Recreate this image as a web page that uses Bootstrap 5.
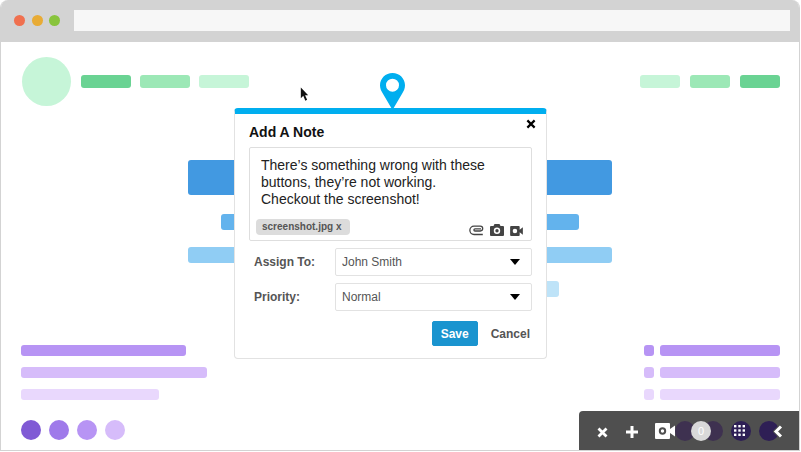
<!DOCTYPE html>
<html lang="en">
<head>
<meta charset="utf-8">
<title>Add A Note</title>
<link href="https://cdn.jsdelivr.net/npm/bootstrap@5.3.0/dist/css/bootstrap.min.css" rel="stylesheet">
<style>
html,body{margin:0;background:#fff;font-family:"Liberation Sans",Arial,sans-serif}
.shell{position:relative;width:800px;height:451px;border:1px solid #d3d3d3;border-top:0;border-radius:8px 8px 0 0;overflow:hidden;background:#fff}
.chrome{height:42px;margin:0 -1px;background:#d3d3d3;padding:10px 10px 11px 14px;gap:12px}
.tl{width:11px;height:11px;border-radius:50%}
.tl-r{background:#f0704f}.tl-y{background:#e8ab35}.tl-g{background:#88c43c}
.tl-set{gap:6.5px}
.addr{flex:1;height:21px;background:#f7f7f7;margin-left:2px}
.stage{height:409px;padding:15px 19px 0 20px}
.head{height:49px;margin-left:1px}
.avatar{width:49px;height:49px;border-radius:50%;background:#c6f5d8}
.pill{height:13px;border-radius:3px}
.g1{background:#6ad393}.g2{background:#9ce8b6}.g3{background:#c6f5d8}
.w50{width:50px}.w40{width:40px}
.lgap{gap:9px;margin-left:10px}
.rgap{gap:10px}
.hero{margin-top:54px;height:154px;margin-right:1px}
.b1{width:424px;height:35px;background:#4299e1;border-radius:3px}
.b2{width:358px;height:16px;background:#63b3ed;border-radius:3px;margin-top:19px}
.b3{width:424px;height:16px;background:#90cdf4;border-radius:3px;margin-top:17px}
.b4{width:318px;height:16px;background:#bee3f8;border-radius:3px;margin-top:18px}
.lists{margin-top:31px}
.bar{height:11px;border-radius:3px}
.p1{background:#b794f4}.p2{background:#d6bcfa}.p3{background:#e9d8fd}.p0{background:#805ad5}.p05{background:#9f7aea}
.lrow{gap:11px}
.w165{width:165px}.w186{width:186px}.w138{width:138px}
.sq{width:10px}.w120{width:120px}
.rrow{gap:6px}
.dots{margin-top:20px;gap:8px}
.dot{width:20px;height:20px;border-radius:50%}
.cursor{position:absolute;left:299px;top:87px;width:9px;height:15px}
.pin{position:absolute;left:379px;top:73px;width:25px;height:37px;z-index:3}
.note{position:absolute;left:233px;top:108px;width:313px;height:251px;background:#fff;border:1px solid #e2e2e2;border-top:6px solid #00aeef;border-radius:4px;padding:9px 14px 0 14px;z-index:2}
.note-x{position:absolute;right:10px;top:5px;width:10px;height:10px}
.note-title{font-size:14px;font-weight:700;line-height:18px;color:#111;margin:0 0 6px;letter-spacing:0}
.box{height:94px;border:1px solid #dedede;border-radius:2px;padding:9px 6px 0 11px;position:relative}
.msg{font-size:14px;line-height:17px;color:#222}
.boxfoot{position:absolute;left:6px;right:8px;bottom:4px}
.chip{background:#dcdcdc;color:#555;font-size:10px;font-weight:700;line-height:16px;padding:0 9px 0 6px;border-radius:4px;margin-bottom:1px}
.tico{gap:6px}
.frow{margin-top:7px;height:28px}
.flabel{width:86px;padding-left:5px;font-size:12px;font-weight:700;color:#555}
.pick{width:197px;height:28px;font-size:12px;color:#555;padding:0 6px;border:1px solid #e2e2e2;border-radius:2px;background-color:#fff;background-position:right 11px center;background-size:10px 6px;background-image:url("data:image/svg+xml,%3Csvg xmlns='http://www.w3.org/2000/svg' viewBox='0 0 10 6'%3E%3Cpath d='M0 0h10l-5 6z' fill='%23000'/%3E%3C/svg%3E");font-family:"Liberation Sans",Arial,sans-serif}
.acts{margin-top:10px;padding-right:2px;gap:13px}
.save{width:46px;height:25px;padding:0;background:#1a94cf;border:1px solid #1a94cf;color:#fff;font-size:12px;font-weight:700;border-radius:2px;line-height:1}
.cancel{font-size:12px;font-weight:700;color:#555}
.tools{position:absolute;left:578px;top:411px;width:222px;height:40px;background:#4f4f4f;border-radius:4px 0 0 0;z-index:4}
.tools>*{position:absolute}
.disc{width:20px;height:20px;border-radius:50%;top:10px}
.d-a{background:#3e3150;left:96px}
.d-b{background:#3e3150;left:124px}
.d-c{background:#2e1f55;left:152px}
.d-d{background:#2e1f55;left:180px}
.zero{left:112px;top:10px;width:20px;height:20px;border-radius:50%;background:#d9d9d9;color:#fff;font-size:11px;line-height:20px;text-align:center}
</style>
</head>
<body>
<div class="shell">
  <div class="chrome d-flex align-items-center">
    <div class="tl-set d-flex"><span class="tl tl-r"></span><span class="tl tl-y"></span><span class="tl tl-g"></span></div>
    <div class="addr"></div>
  </div>
  <div class="stage">
    <div class="head d-flex align-items-center">
      <div class="avatar"></div>
      <div class="lgap d-flex"><div class="pill w50 g1"></div><div class="pill w50 g2"></div><div class="pill w50 g3"></div></div>
      <div class="rgap d-flex ms-auto"><div class="pill w40 g3"></div><div class="pill w40 g2"></div><div class="pill w40 g1"></div></div>
    </div>
    <div class="hero d-flex flex-column align-items-center">
      <div class="b1"></div><div class="b2"></div><div class="b3"></div><div class="b4"></div>
    </div>
    <div class="lists d-flex justify-content-between">
      <div class="lrow d-flex flex-column"><div class="bar w165 p1"></div><div class="bar w186 p2"></div><div class="bar w138 p3"></div></div>
      <div class="lrow d-flex flex-column">
        <div class="rrow d-flex"><div class="bar sq p1"></div><div class="bar w120 p1"></div></div>
        <div class="rrow d-flex"><div class="bar sq p2"></div><div class="bar w120 p2"></div></div>
        <div class="rrow d-flex"><div class="bar sq p3"></div><div class="bar w120 p3"></div></div>
      </div>
    </div>
    <div class="dots d-flex"><div class="dot p0"></div><div class="dot p05"></div><div class="dot p1"></div><div class="dot p2"></div></div>
  </div>

  <svg class="cursor" viewBox="0 0 11 17"><path d="M1 0v13l3-3 2.500 6 2.200-1-2.500-5.500H10z" fill="#111"/></svg>
  <svg class="pin" viewBox="0 0 25 37"><path fill-rule="evenodd" fill="#00aeef" d="M12.500 0C5.600 0 0 5.500 0 12.300c0 3.300 1.200 5.700 2.800 8.300L12.500 37l9.700-16.400c1.600-2.600 2.800-5 2.800-8.300C25 5.500 19.400 0 12.500 0zm0 5.700a6.500 6.500 0 1 1 0 13 6.500 6.500 0 0 1 0-13z"/></svg>

  <div class="note">
    <svg class="note-x" viewBox="0 0 11 11"><path d="M1.500 1.500l8 8M9.500 1.500l-8 8" stroke="#000" stroke-width="2.400" fill="none"/></svg>
    <h1 class="note-title">Add A Note</h1>
    <div class="box">
      <div class="msg">There’s something wrong with these<br>buttons, they’re not working.<br>Checkout the screenshot!</div>
      <div class="boxfoot d-flex justify-content-between align-items-end">
        <span class="chip">screenshot.jpg x</span>
        <span class="tico d-flex align-items-end">
          <svg width="15" height="11" viewBox="0 0 15 11"><path d="M13.800 9.500H5A4 4 0 0 1 5 1.200h6.300a2.400 2.400 0 0 1 0 4.800H6a1.100 1.100 0 0 1 0-2.200h6" fill="none" stroke="#444" stroke-width="1.300"/></svg>
          <svg width="14" height="12" viewBox="0 0 14 12"><path fill-rule="evenodd" fill="#444" d="M4.500 0h5l1 2H13a1 1 0 0 1 1 1v8a1 1 0 0 1-1 1H1a1 1 0 0 1-1-1V3a1 1 0 0 1 1-1h2.500zM7 3.500a3.200 3.200 0 1 0 0 6.400 3.200 3.200 0 0 0 0-6.400zm0 1.500a1.700 1.700 0 1 1 0 3.400A1.700 1.700 0 0 1 7 5z"/></svg>
          <svg width="13" height="10" viewBox="0 0 14 11"><path fill-rule="evenodd" fill="#444" d="M1 0h8.500a1 1 0 0 1 1 1v9a1 1 0 0 1-1 1H1a1 1 0 0 1-1-1V1a1 1 0 0 1 1-1zm4.300 3a2.500 2.500 0 1 0 0 5 2.500 2.500 0 0 0 0-5zM10.500 4l3.500-2.500v8L10.500 7z"/></svg>
        </span>
      </div>
    </div>
    <div class="frow d-flex align-items-center">
      <label class="flabel" for="who">Assign To:</label>
      <select class="pick form-select" id="who"><option>John Smith</option></select>
    </div>
    <div class="frow d-flex align-items-center">
      <label class="flabel" for="pri">Priority:</label>
      <select class="pick form-select" id="pri"><option>Normal</option></select>
    </div>
    <div class="acts d-flex justify-content-end align-items-center">
      <button type="button" class="btn save">Save</button>
      <span class="cancel">Cancel</span>
    </div>
  </div>

  <div class="tools">
    <svg style="left:18px;top:16px" width="11" height="11" viewBox="0 0 11 11"><path d="M1.500 1.500l8 8M9.500 1.500l-8 8" stroke="#fff" stroke-width="2.800" fill="none"/></svg>
    <svg style="left:47px;top:15px" width="12" height="12" viewBox="0 0 12 12"><path d="M6 0v12M0 6h12" stroke="#fff" stroke-width="3" fill="none"/></svg>
    <svg style="left:76px;top:12px" width="20" height="16" viewBox="0 0 20 16"><path fill-rule="evenodd" fill="#fff" d="M1 0h13a1 1 0 0 1 1 1v14a1 1 0 0 1-1 1H1a1 1 0 0 1-1-1V1a1 1 0 0 1 1-1zm6.500 4.300a3.700 3.700 0 1 0 0 7.400 3.700 3.700 0 0 0 0-7.400zm0 2a1.700 1.700 0 1 1 0 3.400 1.700 1.700 0 0 1 0-3.400zM15 6l5-3.500v11L15 10z"/></svg>
    <div class="disc d-a"></div>
    <div class="disc d-b"></div>
    <div class="zero">0</div>
    <div class="disc d-c"></div>
    <svg style="left:154px;top:13px" width="14" height="14" viewBox="0 0 14 14" fill="#fff"><rect x="1" y="1" width="2.400" height="2.400"/><rect x="5.300" y="1" width="2.400" height="2.400"/><rect x="9.600" y="1" width="2.400" height="2.400"/><rect x="1" y="5.300" width="2.400" height="2.400"/><rect x="5.300" y="5.300" width="2.400" height="2.400"/><rect x="9.600" y="5.300" width="2.400" height="2.400"/><rect x="1" y="9.600" width="2.400" height="2.400"/><rect x="5.300" y="9.600" width="2.400" height="2.400"/><rect x="9.600" y="9.600" width="2.400" height="2.400"/></svg>
    <div class="disc d-d"></div>
    <svg style="left:194px;top:14px" width="12" height="13" viewBox="0 0 12 13"><path d="M8 1.500L3 6.500l5 5" stroke="#4f4f4f" stroke-width="5" fill="none"/><path d="M8 1.500L3 6.500l5 5" stroke="#fff" stroke-width="3" fill="none"/></svg>
  </div>
</div>
<script src="https://cdn.jsdelivr.net/npm/bootstrap@5.3.0/dist/js/bootstrap.bundle.min.js"></script>
</body>
</html>
